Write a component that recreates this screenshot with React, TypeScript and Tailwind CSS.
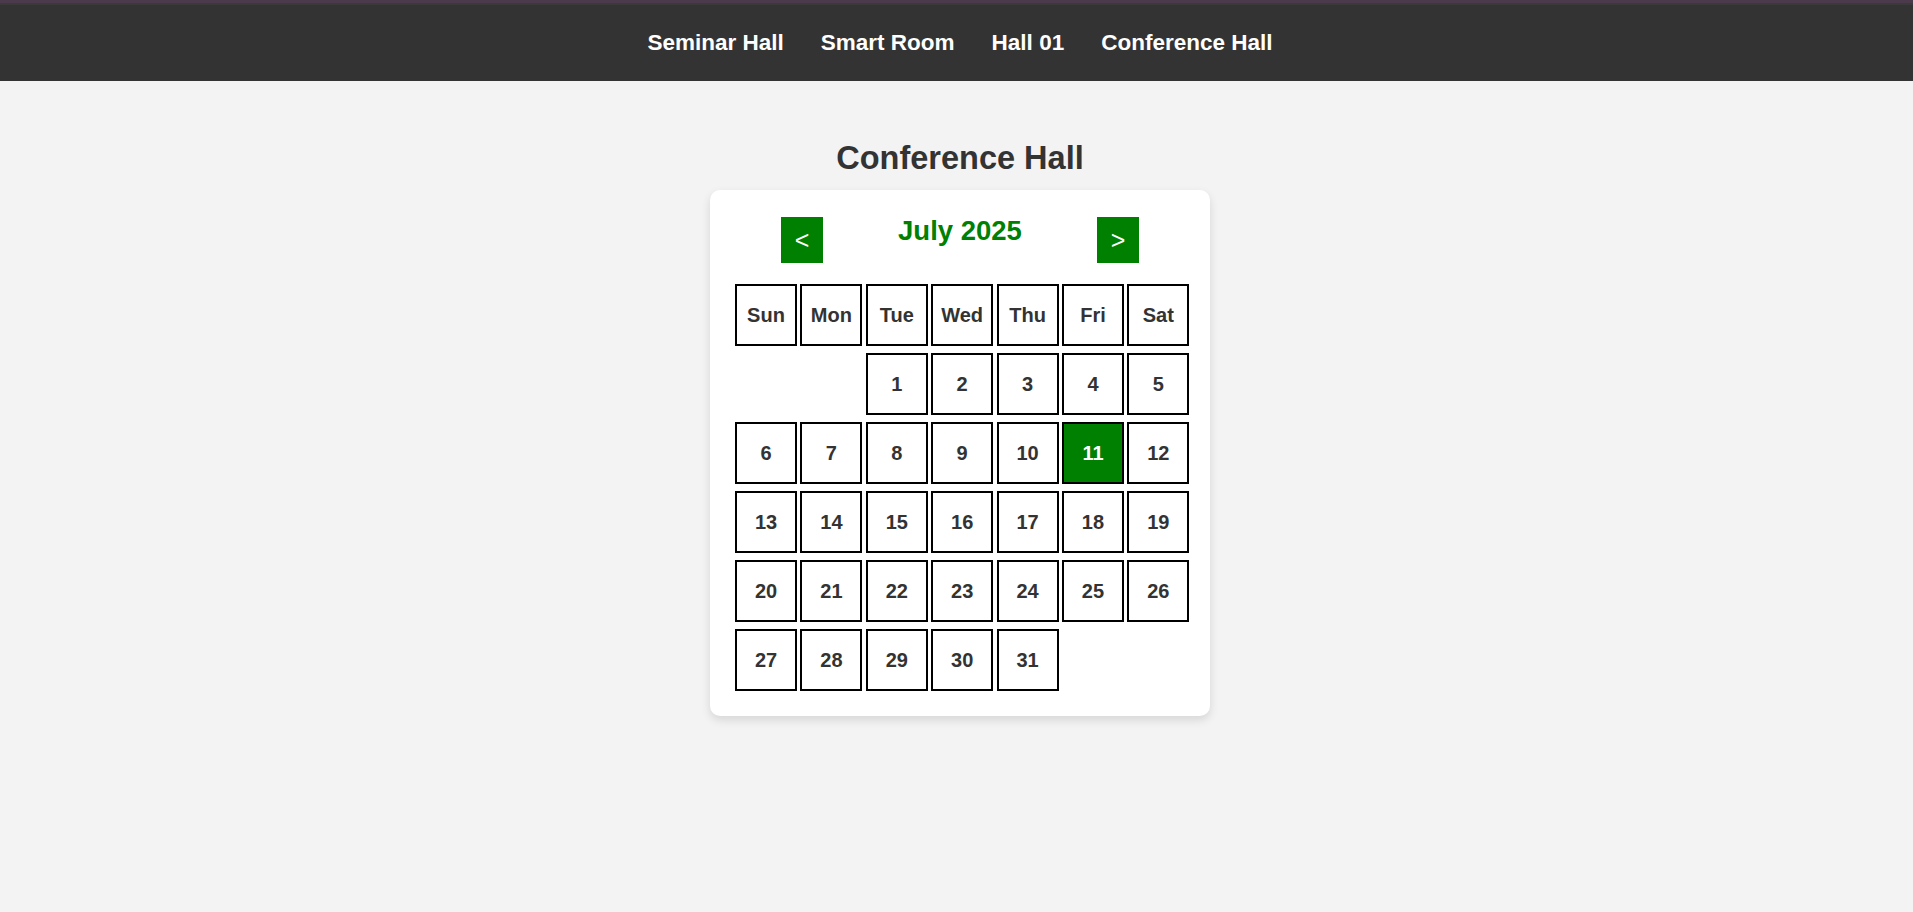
import React from "react";

const days = ["Sun", "Mon", "Tue", "Wed", "Thu", "Fri", "Sat"];

export default function App() {
  const cells: (number | null)[] = [null, null];
  for (let d = 1; d <= 31; d++) cells.push(d);

  return (
    <div className="w-full min-h-[912px] overflow-hidden bg-[#f3f3f3]" style={{ fontFamily: '"Liberation Sans", Arial, sans-serif' }}>
      <div className="w-[1920px]">
        <div className="h-[3px] bg-[#4b3a4c]" />
        <div className="h-[2px] bg-[#3a3a3a]" />
        <nav className="h-[76px] bg-[#333333] flex items-center justify-center gap-[37px] pb-[1px]">
          {["Seminar Hall", "Smart Room", "Hall 01", "Conference Hall"].map((t) => (
            <a key={t} className="text-white font-bold text-[22.5px] leading-[26px] cursor-pointer">
              {t}
            </a>
          ))}
        </nav>
        <main className="flex flex-col items-center">
          <h2 className="mt-[59px] text-[32.5px] leading-[37px] font-bold text-[#333333]">Conference Hall</h2>
          <div className="mt-[13px] w-[500px] bg-white rounded-[10px] shadow-[0_4px_10px_rgba(0,0,0,0.12)] pt-[27px] pb-[25px] flex flex-col items-start">
            <div className="self-center w-[358px] flex items-start justify-between">
              <button className="w-[42px] h-[46px] bg-[#008000] text-white text-[25px] leading-none flex items-center justify-center">
                &lt;
              </button>
              <h3 className="-mt-[1px] text-[27.5px] leading-[30px] font-bold text-[#008000]">July 2025</h3>
              <button className="w-[42px] h-[46px] bg-[#008000] text-white text-[25px] leading-none flex items-center justify-center">
                &gt;
              </button>
            </div>
            <div className="ml-[25px] mt-[21px] grid grid-cols-[repeat(7,62px)] gap-x-[3.4px] gap-y-[7px]">
              {days.map((d) => (
                <div key={d} className="h-[62px] border-2 border-black bg-white flex items-center justify-center text-[20px] font-bold text-[#333333]">
                  {d}
                </div>
              ))}
              {cells.map((c, i) =>
                c === null ? (
                  <div key={"e" + i} className="h-[62px]" />
                ) : c === 11 ? (
                  <div key={i} className="h-[62px] border-2 border-black bg-[#008000] flex items-center justify-center text-[20px] font-bold text-white">
                    {c}
                  </div>
                ) : (
                  <div key={i} className="h-[62px] border-2 border-black bg-white flex items-center justify-center text-[20px] font-bold text-[#333333]">
                    {c}
                  </div>
                )
              )}
            </div>
          </div>
        </main>
      </div>
    </div>
  );
}
